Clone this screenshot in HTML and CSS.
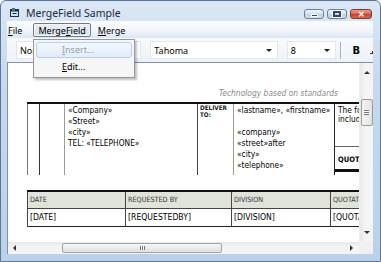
FILE: index.html
```html
<!DOCTYPE html>
<html lang="en">
<head>
    <meta charset="UTF-8">
    <title>MergeField Sample</title>
    <link rel="stylesheet" href="styles.css">
</head>
<body>
<div class="window">
    <!-- Title bar -->
    <div class="titlebar">
        <svg class="app-icon" width="9" height="9" viewBox="0 0 9 9">
            <rect x="0.5" y="1.5" width="8" height="7" fill="#cfe3ee" stroke="#1d2f45"/>
            <rect x="0.5" y="1.5" width="8" height="2" fill="#1d2f45"/>
            <rect x="2" y="0" width="3" height="3" fill="#2f7f8f"/>
            <rect x="2.5" y="5" width="4" height="1" fill="#1d2f45"/>
        </svg>
        <span class="title">MergeField Sample</span>
        <div class="caption-buttons">
            <span class="cbtn min"><i></i></span>
            <span class="cbtn max"><i></i></span>
            <span class="cbtn close">&#x2715;</span>
        </div>
    </div>

    <!-- Menu bar -->
    <div class="menubar">
        <span class="menu-item first"><u>F</u>ile</span>
        <span class="menu-item open">Merge<u>F</u>ield</span>
        <span class="menu-item"><u>M</u>erge</span>
    </div>

    <!-- Toolbar -->
    <div class="toolbar">
        <div class="combo combo-style"><span>Normal</span><b class="arrow"></b></div>
        <div class="combo combo-font"><span>Tahoma</span><b class="arrow"></b></div>
        <div class="combo combo-size"><span>8</span><b class="arrow"></b></div>
        <span class="tsep"></span>
        <span class="tbtn bold">B</span>
        <span class="tbtn corner"></span>
    </div>

    <!-- Document area -->
    <div class="client">
        <div class="client-row">
            <div class="doc">
                <div class="page">
                    <div class="tagline">Technology based on standards</div>

                    <table class="head-table">
                        <colgroup>
                            <col style="width:12px">
                            <col style="width:25px">
                            <col style="width:133px">
                            <col style="width:36px">
                            <col style="width:101px">
                            <col style="width:60px">
                        </colgroup>
                        <tr>
                            <td class="c-blank"></td>
                            <td class="c-blank dark"></td>
                            <td class="c-from">
                                «Company»<br>
                                «Street»<br>
                                «city»<br>
                                TEL: «TELEPHONE»
                            </td>
                            <td class="c-label">DELIVER<br>TO:</td>
                            <td class="c-to">
                                «lastname», «firstname»<br>
                                <br>
                                «company»<br>
                                «street»after<br>
                                «city»<br>
                                «telephone»
                            </td>
                            <td class="c-note">
                                <div class="note-text">The fo<br>includi</div>
                                <div class="quote-box">QUOT</div>
                            </td>
                        </tr>
                    </table>

                    <table class="info-table">
                        <colgroup>
                            <col style="width:98px">
                            <col style="width:106px">
                            <col style="width:99px">
                            <col style="width:80px">
                        </colgroup>
                        <tr class="info-head">
                            <td>DATE</td>
                            <td>REQUESTED BY</td>
                            <td>DIVISION</td>
                            <td>QUOTAT</td>
                        </tr>
                        <tr class="info-row">
                            <td>[DATE]</td>
                            <td>[REQUESTEDBY]</td>
                            <td>[DIVISION]</td>
                            <td>[QUOTA</td>
                        </tr>
                    </table>
                </div>
            </div>
            <div class="vscroll">
                <span class="sarrow up"></span>
                <span class="vthumb"><i></i></span>
                <span class="sarrow down"></span>
            </div>
        </div>
        <div class="hscroll-row">
            <div class="hscroll">
                <span class="sarrow left"></span>
                <span class="hthumb"><i></i></span>
                <span class="sarrow right"></span>
            </div>
            <div class="sizegrip"></div>
        </div>
    </div>

    <!-- Open MergeField menu -->
    <div class="dropdown">
        <div class="dd-item disabled hot"><u>I</u>nsert...</div>
        <div class="dd-item"><u>E</u>dit...</div>
    </div>
</div>
</body>
</html>
```

FILE: styles.css
```css
/* Reset */
* {
    margin: 0;
    padding: 0;
    box-sizing: border-box;
}

body {
    width: 381px;
    height: 262px;
    overflow: hidden;
    font-family: "Noto Sans", "Open Sans", sans-serif;
    font-size: 9px;
    color: #000;
}

/* Window frame */
.window {
    position: relative;
    width: 381px;
    height: 262px;
    display: flex;
    flex-direction: column;
    padding: 0 7px 7px 6px;
    background: linear-gradient(#dbe7f5, #c6d9ef 30%, #bad1ec);
    border: 1px solid #5d7696;
    border-radius: 6px 6px 0 0;
}

/* Title bar */
.titlebar {
    height: 20px;
    display: flex;
    align-items: center;
    padding-left: 3px;
}

.app-icon {
    margin-right: 7px;
    margin-top: 3px;
}

.title {
    font-size: 10.5px;
    color: #1e2b3c;
    padding-top: 4px;
}

.caption-buttons {
    margin-left: auto;
    display: flex;
    gap: 3px;
    margin-top: 6px;
    margin-right: 1px;
}

.cbtn {
    height: 10px;
    width: 20px;
    border: 1px solid #6b7e96;
    border-radius: 3px;
    background: linear-gradient(#eef4fb, #d3e0ef 50%, #bfd1e6 51%, #d0def0);
    display: flex;
    align-items: center;
    justify-content: center;
}

.cbtn.min i {
    width: 7px;
    height: 3px;
    background: #34465c;
    border: 1px solid #fff;
    margin-top: 3px;
}

.cbtn.max i {
    width: 8px;
    height: 6px;
    border: 2px solid #34465c;
    outline: 1px solid #fff;
}

.cbtn.close {
    width: 22px;
    border-color: #7d3b33;
    background: linear-gradient(#e8a08e, #d46a55 50%, #c4412b 51%, #d5694f);
    color: #fff;
    font-size: 8px;
    font-weight: bold;
    line-height: 1;
}

/* Menu bar */
.menubar {
    height: 17px;
    display: flex;
    align-items: center;
    background: linear-gradient(#fbfcfe, #f2f6fb 55%, #dbe6f4);
}

.menu-item {
    font-size: 9px;
    padding: 0 4px;
    height: 14px;
    line-height: 13px;
    border: 1px solid transparent;
    margin-right: 2px;
}

.menu-item.first {
    padding-left: 0;
    margin-right: 6px;
}

.menu-item.open {
    border-color: #6e7c8c;
    border-radius: 2px;
    background: linear-gradient(#e9eef5, #d8e1ec);
    box-shadow: inset 0 0 0 1px #f5f8fb;
}

/* Toolbar */
.toolbar {
    height: 24px;
    display: flex;
    align-items: center;
    padding-left: 9px;
    background: linear-gradient(#f7f9fc, #eef2f8);
}

.combo {
    height: 18px;
    background: #fff;
    border: 1px solid #e3e6eb;
    display: flex;
    align-items: center;
    padding-left: 3px;
    font-size: 9px;
    margin-right: 9px;
}

.combo span {
    flex: 1;
}

.combo .arrow {
    width: 0;
    height: 0;
    border-left: 3px solid transparent;
    border-right: 3px solid transparent;
    border-top: 3px solid #222;
    margin-right: 5px;
}

.combo-style { width: 126px; }
.combo-font { width: 128px; }
.combo-size { width: 50px; margin-right: 4px; }

.tsep {
    width: 1px;
    height: 17px;
    background: #a9b1bd;
    margin-right: 11px;
}

.tbtn.bold {
    font-family: "DejaVu Sans", sans-serif;
    font-weight: bold;
    font-size: 10px;
    margin-right: 10px;
}

.tbtn.corner {
    width: 3px;
    height: 3px;
    border-right: 1px solid #333;
    border-bottom: 1px solid #333;
    margin-top: 4px;
}

/* Client area */
.client {
    flex: 1;
    display: flex;
    flex-direction: column;
    border-top: 1px solid #8292a6;
    border-left: 1px solid #8292a6;
    background: #fff;
}

.client-row {
    flex: 1;
    display: flex;
    min-height: 0;
}

.doc {
    flex: 1;
    overflow: hidden;
    background: #fff;
}

.page {
    width: 420px;
    padding: 25px 0 0 19px;
    font-family: "DejaVu Sans", sans-serif;
    font-stretch: condensed;
    font-size: 8.3px;
}

.tagline {
    width: 311px;
    text-align: right;
    font-style: italic;
    color: #8a8a8a;
    font-size: 8.4px;
    height: 14px;
}

/* Header table */
.head-table {
    border-collapse: collapse;
    table-layout: fixed;
    border-top: 2px solid #111;
    width: 367px;
}

.head-table td {
    vertical-align: top;
    height: 72px;
    border-left: 1px solid #9a9a9a;
}

.head-table td.c-blank { border-left-color: #777; }
.head-table td.dark { border-left-color: #333; }

.c-from,
.c-to {
    padding: 1px 0 0 3px;
    line-height: 11px;
    white-space: nowrap;
}

.head-table td.c-label {
    padding: 0 0 0 2px;
    font-size: 6.3px;
    line-height: 7px;
    font-weight: bold;
    color: #222;
    border-left-color: #444;
}

.head-table td.c-note {
    border-left-color: #222;
    padding: 0;
}

.note-text {
    padding: 2px 0 0 3px;
    line-height: 9px;
    height: 42px;
    white-space: nowrap;
}

.quote-box {
    border-top: 1px solid #666;
    border-bottom: 3px solid #111;
    font-weight: bold;
    padding: 8px 0 0 3px;
    height: 26px;
    font-size: 7.5px;
    white-space: nowrap;
}

/* Info table */
.info-table {
    margin-top: 15px;
    border-collapse: collapse;
    table-layout: fixed;
    width: 383px;
    border-top: 2px solid #111;
    border-bottom: 1px solid #222;
}

.info-table td {
    border-left: 1px solid #444;
    padding-left: 2px;
    white-space: nowrap;
}

.info-head td {
    background: #dfe3da;
    height: 17px;
    font-size: 7.2px;
    color: #333;
    border-bottom: 1px solid #444;
}

.info-row td {
    height: 18px;
    font-size: 8.6px;
}

/* Scrollbars */
.vscroll {
    width: 14px;
    display: flex;
    flex-direction: column;
    align-items: center;
    background: linear-gradient(90deg, #e8e8e8, #f4f4f4 40%, #f4f4f4);
    border-left: 1px solid #ececec;
}

.sarrow {
    width: 0;
    height: 0;
    border: 3px solid transparent;
}

.sarrow.up {
    border-bottom-color: #333;
    border-top-width: 0;
    margin-top: 8px;
}

.sarrow.down {
    border-top-color: #333;
    border-bottom-width: 0;
    margin-top: auto;
    margin-bottom: 8px;
}

.vthumb {
    width: 12px;
    height: 27px;
    margin-top: 25px;
    border: 1px solid #9b9b9b;
    border-radius: 2px;
    background: linear-gradient(90deg, #f4f4f4, #e2e2e2);
    display: flex;
    align-items: center;
    justify-content: center;
}

.vthumb i {
    width: 5px;
    height: 5px;
    border-top: 1px solid #777;
    border-bottom: 1px solid #777;
    background: linear-gradient(#fff 40%, #777 40%, #777 60%, #fff 60%);
}

.hscroll-row {
    height: 12px;
    display: flex;
}

.hscroll {
    flex: 1;
    display: flex;
    align-items: center;
    background: linear-gradient(#e8e8e8, #f4f4f4 40%, #f4f4f4);
}

.sarrow.left {
    border-right-color: #333;
    border-left-width: 0;
    margin-left: 5px;
}

.sarrow.right {
    border-left-color: #333;
    border-right-width: 0;
    margin-left: auto;
    margin-right: 6px;
}

.hthumb {
    width: 160px;
    height: 10px;
    margin-left: 46px;
    border: 1px solid #a3a3a3;
    border-radius: 2px;
    background: linear-gradient(#f6f6f6, #e0e0e0);
    display: flex;
    align-items: center;
    justify-content: center;
}

.hthumb i {
    width: 5px;
    height: 4px;
    border-left: 1px solid #777;
    border-right: 1px solid #777;
    background: linear-gradient(90deg, #f6f6f6 40%, #777 40%, #777 60%, #f6f6f6 60%);
}

.sizegrip {
    width: 14px;
    background: #f0f0f0;
}

/* Dropdown menu */
.dropdown {
    position: absolute;
    left: 32px;
    top: 38px;
    width: 102px;
    height: 39px;
    background: #f5f6f7;
    border: 1px solid #979797;
    box-shadow: 2px 2px 2px rgba(0, 0, 0, 0.25);
    padding: 2px;
}

.dd-item {
    height: 16px;
    line-height: 14px;
    padding-left: 25px;
    font-size: 9px;
    border: 1px solid transparent;
}

.dd-item.disabled {
    color: #9aa0a6;
}

.dd-item.hot {
    border-color: #b6d0ee;
    border-radius: 3px;
    background: linear-gradient(#f2f7fd, #e2edf9);
}

.dd-item + .dd-item {
    margin-top: 1px;
}
```
